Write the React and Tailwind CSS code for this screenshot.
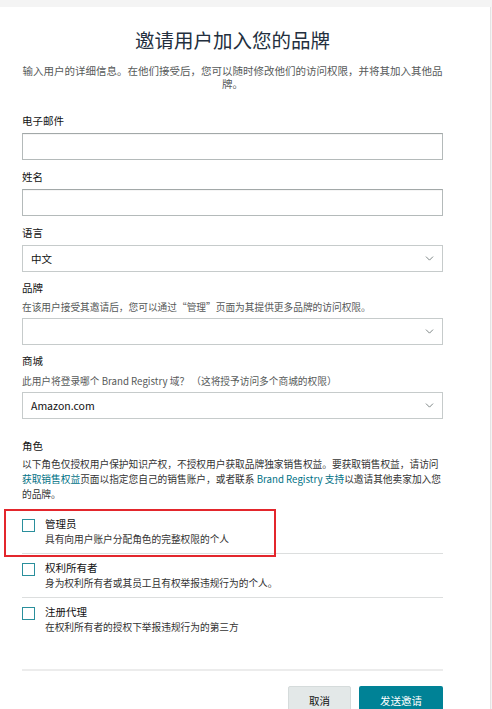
import { ChevronDown } from 'lucide-react'

const font = { fontFamily: '"Noto Sans CJK SC", "Noto Sans", sans-serif' }

function Label({ children }) {
  return <div className="text-[10.5px] leading-[14px] text-[#111]">{children}</div>
}

function Help({ children, className = '' }) {
  return <div className={`text-[9.7px] leading-[14px] text-[#565959] ${className}`}>{children}</div>
}

function TextBox({ className = '' }) {
  return (
    <div className={`h-[27px] border border-[#b4baba] border-t-[#a2a8a8] bg-white shadow-[inset_0_1px_0_rgba(0,0,0,0.04)] ${className}`} />
  )
}

function Select({ value, className = '' }) {
  return (
    <div className={`h-[27px] flex items-center justify-between pl-[8px] pr-[6px] border border-[#c6cbcb] bg-white ${className}`}>
      <span className="text-[10.5px] text-[#111]">{value}</span>
      <ChevronDown size={13} strokeWidth={1.6} className="text-[#6b7474]" />
    </div>
  )
}

function Role({ title, desc, last, children }) {
  return (
    <div className={`relative flex gap-[10px] pt-[7px] ${last ? '' : 'pb-[6px] border-b border-[#dcdede]'}`}>
      {children}
      <div className="mt-[2px] w-[13px] h-[13px] shrink-0 border-[1.5px] border-[#2a8f9c] bg-white" />
      <div>
        <div className="text-[10.5px] leading-[14px] text-[#111]">{title}</div>
        <div className="mt-[1px] text-[9.7px] leading-[15px] text-[#333]">{desc}</div>
      </div>
    </div>
  )
}

export default function App() {
  return (
    <div className="w-[492px] min-h-[709px] bg-[#f4f4f4] pt-[7px]" style={font}>
      <div className="w-[491px] min-h-[702px] bg-white border-r border-[#e4e4e4] pt-[21px] overflow-hidden">
        <div className="ml-[22px] w-[421px]">
          <h1 className="text-center text-[19.5px] leading-[24px] text-[#232f3e]">邀请用户加入您的品牌</h1>
          <p className="mt-[13px] text-center text-[10.5px] leading-[12.5px] text-[#565959]">
            输入用户的详细信息。在他们接受后，您可以随时修改他们的访问权限，并将其加入其他品牌。
          </p>

          <div className="mt-[24px]">
            <Label>电子邮件</Label>
            <TextBox className="mt-[5px]" />
          </div>
          <div className="mt-[10px]">
            <Label>姓名</Label>
            <TextBox className="mt-[5px]" />
          </div>
          <div className="mt-[10px]">
            <Label>语言</Label>
            <Select value="中文" className="mt-[5px]" />
          </div>
          <div className="mt-[9px]">
            <Label>品牌</Label>
            <Help className="mt-[5px]">在该用户接受其邀请后，您可以通过“管理”页面为其提供更多品牌的访问权限。</Help>
            <Select value="" className="mt-[4px]" />
          </div>
          <div className="mt-[9px]">
            <Label>商城</Label>
            <Help className="mt-[6px]">此用户将登录哪个 Brand Registry 域？ （这将授予访问多个商城的权限）</Help>
            <Select value="Amazon.com" className="mt-[4px]" />
          </div>

          <div className="mt-[20px]">
            <Label>角色</Label>
            <div className="mt-[4px] text-[9.7px] leading-[15px] text-[#333] whitespace-nowrap">
              <div>以下角色仅授权用户保护知识产权，不授权用户获取品牌独家销售权益。要获取销售权益，请访问</div>
              <div className="flex">
                <span className="text-[#007185]">获取销售权益</span>
                <span>页面以指定您自己的销售账户，或者联系&nbsp;</span>
                <span className="text-[#007185]">Brand Registry 支持</span>
                <span>以邀请其他卖家加入您</span>
              </div>
              <div>的品牌。</div>
            </div>
          </div>

          <div className="mt-[8px]">
            <Role title="管理员" desc="具有向用户账户分配角色的完整权限的个人">
              <div className="absolute left-[-18px] top-[-1px] w-[272px] h-[48px] border-2 border-[#e3262c] pointer-events-none" />
            </Role>
            <Role title="权利所有者" desc="身为权利所有者或其员工且有权举报违规行为的个人。" />
            <Role title="注册代理" desc="在权利所有者的授权下举报违规行为的第三方" last />
          </div>

          <div className="mt-[34px] h-[2px] bg-[#ececec]" />

          <div className="mt-[15px] flex justify-end gap-[8px]">
            <button className="w-[63px] h-[30px] rounded-[2px] bg-[#e3e8e8] border border-[#d5dbdb] text-[10.5px] text-[#111]">取消</button>
            <button className="w-[84px] h-[30px] rounded-[2px] bg-[#008296] text-[10.5px] text-white">发送邀请</button>
          </div>
        </div>
      </div>
    </div>
  )
}
